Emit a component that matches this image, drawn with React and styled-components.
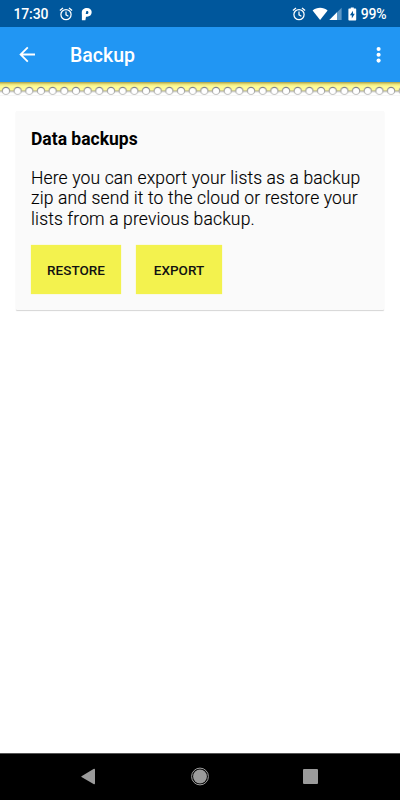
import React from "react";
import styled, { createGlobalStyle } from "styled-components";

const GlobalStyle = createGlobalStyle`
  *, *::before, *::after { box-sizing: border-box; }
  html, body { margin: 0; background: #fff; }
  body { font-family: Roboto, "Liberation Sans", sans-serif; overflow: hidden; }
`;

const Screen = styled.div`
  width: 400px;
  height: 800px;
  display: flex;
  flex-direction: column;
  background: #fff;
`;

const StatusBar = styled.header`
  flex: none;
  height: 27px;
  padding: 1px 13.5px 0 13.5px;
  display: flex;
  align-items: center;
  justify-content: space-between;
  background: #00579c;
  color: #fff;
`;

const StatusGroup = styled.div`
  display: flex;
  align-items: center;
`;

const StatusText = styled.span`
  margin-left: ${(p) => p.$gap || 0}px;
  font-size: 14px;
  font-weight: 500;
  line-height: 16px;
  letter-spacing: -0.15px;
`;

const StatusIcon = styled.svg`
  display: block;
  flex: none;
  margin-left: ${(p) => p.$gap}px;
`;

const AppBar = styled.div`
  flex: none;
  height: 55px;
  padding: 0 17px 0 18px;
  display: flex;
  align-items: center;
  background: #2196f3;
  color: #fff;
`;

const IconButton = styled.button`
  border: 0;
  padding: 0;
  background: none;
  color: inherit;
  display: flex;
`;

const Title = styled.h1`
  margin: 0 auto 0 33px;
  padding-top: 2px;
  font-size: 19.5px;
  line-height: 24px;
  font-weight: 500;
`;

const Binding = styled.svg`
  display: block;
  flex: none;
`;

const Content = styled.main`
  flex: 1;
  padding: 14px 16px 0 15.5px;
`;

const Card = styled.section`
  height: 199px;
  padding: 17px 15.5px 0;
  border-radius: 1px;
  background: #fafafa;
  box-shadow: 0 1px 1px rgba(0, 0, 0, 0.17);
  color: #000;
`;

const CardTitle = styled.h2`
  margin: 0;
  font-size: 17.5px;
  line-height: 22px;
  font-weight: 700;
`;

const CardText = styled.p`
  margin: 18px 0 0;
  font-size: 17.5px;
  line-height: 20.3px;
  font-weight: 300;
  letter-spacing: 0.14px;
  white-space: nowrap;
  -webkit-text-stroke: 0.15px #000;
`;

const Actions = styled.div`
  margin-top: 16.5px;
  display: flex;
  gap: 15px;
`;

const ActionButton = styled.button`
  width: ${(p) => p.$width}px;
  height: 49px;
  border: 0;
  padding: 1px 0 0;
  background: #f3f24e;
  box-shadow: 0 0 1px rgba(243, 242, 78, 0.7);
  color: #111;
  font: 500 13.5px/16px Roboto, "Liberation Sans", sans-serif;
  text-transform: uppercase;
`;

const NavBar = styled.nav`
  flex: none;
  height: 47px;
  border-top: 1px solid #555;
  display: flex;
  justify-content: space-between;
  align-items: center;
  padding: 0 80px 0 78px;
  background: #000;
`;

const AlarmIcon = ({ gap }) => (
  <StatusIcon $gap={gap} width="14" height="14" viewBox="0 0 14 14" fill="none" stroke="#fff" strokeWidth="1.25">
    <circle cx="7" cy="7.6" r="5.1" />
    <path d="M7 4.6v3.2l2.4 1.400M.9 3.500 4 .9M13.100 3.500 10 .9" />
  </StatusIcon>
);

const PIcon = ({ gap }) => (
  <StatusIcon $gap={gap} width="12" height="14" viewBox="0 0 12 14">
    <path
      fill="#fff"
      fillRule="evenodd"
      d="M.8 5.200C.8 2.700 3 .9 6 .9c2.900 0 4.700 1.600 4.700 4.200 0 2.900-2 4.600-4.700 4.600H5L4.400 13.200H.9V8.100Q.8 6.700.8 5.200zM5.400 3.900 4.700 7.100h1c1.100 0 1.700-.6 1.700-1.700 0-1-.5-1.500-1.300-1.500z"
    />
  </StatusIcon>
);

const BindingStrip = () => (
  <Binding width="400" height="15" viewBox="0 0 400 15">
    <defs>
      <linearGradient id="paper" x1="0" y1="0" x2="0" y2="1">
        <stop offset="0" stopColor="#a49c48" />
        <stop offset="0.13" stopColor="#cbc465" />
        <stop offset="0.3" stopColor="#f1ec82" />
        <stop offset="0.5" stopColor="#fdfa96" />
        <stop offset="1" stopColor="#fdfaa0" />
      </linearGradient>
      <linearGradient id="ring" x1="0" y1="0" x2="0" y2="1">
        <stop offset="0" stopColor="#858585" />
        <stop offset="1" stopColor="#c4c4c4" />
      </linearGradient>
      <pattern id="holes" x="0.15" y="0" width="11.67" height="15" patternUnits="userSpaceOnUse">
        <circle cx="5.83" cy="8.9" r="3.6" fill="#fff" stroke="url(#ring)" strokeWidth="1.2" />
      </pattern>
    </defs>
    <rect width="400" height="9" fill="url(#paper)" />
    <rect y="8.600" width="400" height="1" fill="#969578" />
    <rect y="9.600" width="400" height="1" fill="#e3e3e3" />
    <rect width="400" height="15" fill="url(#holes)" />
    <rect y="13" width="400" height="1" fill="#f6f6f6" />
  </Binding>
);

export default function App() {
  return (
    <>
      <GlobalStyle />
      <Screen>
        <StatusBar>
          <StatusGroup>
            <StatusText>17:30</StatusText>
            <AlarmIcon gap={10.5} />
            <PIcon gap={8.7} />
          </StatusGroup>
          <StatusGroup>
            <AlarmIcon gap={0} />
            <StatusIcon $gap={6} width="16" height="14" viewBox="0 0 16 14">
              <path fill="#fff" d="M.6 3.500C4.800-.1 11.400-.1 15.600 3.500L8.100 13z" />
            </StatusIcon>
            <StatusIcon $gap={1.5} width="13" height="14" viewBox="0 0 13 14">
              <path fill="#5c97c6" d="M12.600.7v12.200H.4z" />
              <path fill="#fff" d="M8 5.300v7.600H.4z" />
            </StatusIcon>
            <StatusIcon $gap={6} width="9" height="14" viewBox="0 0 9 14">
              <path fill="#fff" d="M2.800.4h3v1.200h1.800q.6 0 .6.6v10.500q0 .7-.7.700H1.100q-.7 0-.7-.7V2.200q0-.6.6-.6h1.800z" />
              <path fill="#00579c" d="M5 3.700v3h1.800L3.800 11.500V8.200H1.900z" />
            </StatusIcon>
            <StatusText $gap={3.5}>99%</StatusText>
          </StatusGroup>
        </StatusBar>
        <AppBar>
          <IconButton aria-label="Back">
            <svg width="19" height="18" viewBox="0 0 19 18" fill="none" stroke="#fff" strokeWidth="1.800">
              <path d="M17 8.500H3M9.800 1.300 2.600 8.500l7.200 7.200" />
            </svg>
          </IconButton>
          <Title>Backup</Title>
          <IconButton aria-label="More options">
            <svg width="9" height="18" viewBox="0 0 9 18" fill="#fff">
              <circle cx="4.600" cy="3" r="2.050" />
              <circle cx="4.600" cy="8.800" r="2.050" />
              <circle cx="4.600" cy="14.600" r="2.050" />
            </svg>
          </IconButton>
        </AppBar>
        <BindingStrip />
        <Content>
          <Card>
            <CardTitle>Data backups</CardTitle>
            <CardText>
              Here you can export your lists as a backup
              <br />
              zip and send it to the cloud or restore your
              <br />
              lists from a previous backup.
            </CardText>
            <Actions>
              <ActionButton $width={90}>Restore</ActionButton>
              <ActionButton $width={86}>Export</ActionButton>
            </Actions>
          </Card>
        </Content>
        <NavBar>
          <svg width="20" height="20" viewBox="0 0 20 20">
            <path fill="#9b9b9b" d="M3.500 9.300 15.500 2q1.500-.8 1.500.7v13.500q0 1.500-1.500.7L3.500 9.900q-.5-.3 0-.6z" />
          </svg>
          <svg width="20" height="20" viewBox="0 0 20 20">
            <circle cx="11" cy="9.500" r="8.400" fill="none" stroke="#a0a0a0" strokeWidth="1" />
            <circle cx="11" cy="9.500" r="6.900" fill="#9b9b9b" />
          </svg>
          <svg width="20" height="20" viewBox="0 0 20 20">
            <rect x="3" y="2" width="15" height="15" rx="1" fill="#9b9b9b" />
          </svg>
        </NavBar>
      </Screen>
    </>
  );
}
